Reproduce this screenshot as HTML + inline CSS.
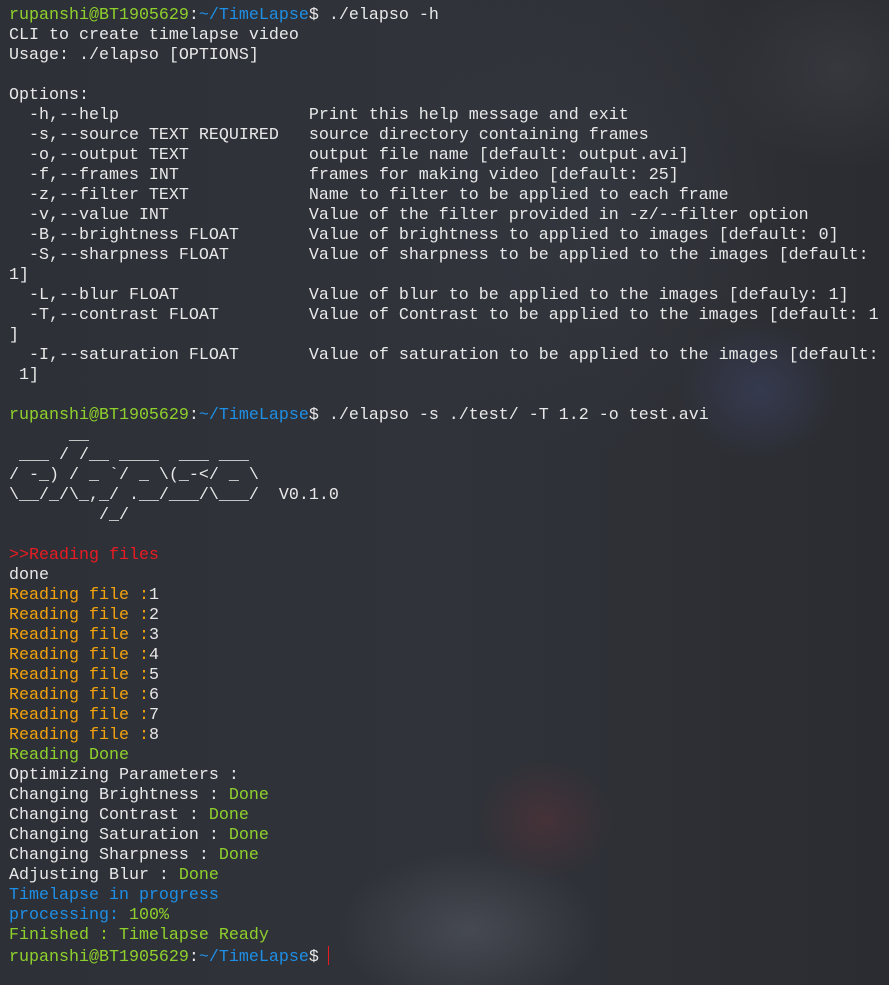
<!DOCTYPE html>
<html><head><meta charset="utf-8"><style>
html,body{margin:0;padding:0;}
body{width:889px;height:985px;overflow:hidden;background:#2c2e33;
background-image:
radial-gradient(ellipse 80px 70px at 760px 390px, rgba(70,80,130,0.35), transparent),
radial-gradient(ellipse 70px 60px at 545px 820px, rgba(110,50,55,0.35), transparent),
radial-gradient(ellipse 130px 80px at 470px 930px, rgba(95,100,110,0.45), transparent),
radial-gradient(ellipse 200px 250px at 600px 200px, rgba(60,65,75,0.35), transparent),
radial-gradient(ellipse 120px 100px at 840px 70px, rgba(70,72,80,0.4), transparent),
linear-gradient(90deg,#2e3037 0%,#30333a 50%,#2b2c31 100%);}
pre{margin:0;position:absolute;left:9px;top:6px;font-family:"Liberation Mono",monospace;font-size:16.67px;line-height:20px;color:#e8e8e8;white-space:pre;}
.g{color:#8fd12c}.b{color:#1e8fe6}.r{color:#e81b22}.o{color:#f2a20d}
.cur{display:inline-block;width:1px;height:19px;background:#e81b22;vertical-align:-4px;margin-left:9px}
</style></head><body><pre><span class="g">rupanshi@BT1905629</span>:<span class="b">~/TimeLapse</span>$ ./elapso -h
CLI to create timelapse video
Usage: ./elapso [OPTIONS]

Options:
  -h,--help                   Print this help message and exit
  -s,--source TEXT REQUIRED   source directory containing frames
  -o,--output TEXT            output file name [default: output.avi]
  -f,--frames INT             frames for making video [default: 25]
  -z,--filter TEXT            Name to filter to be applied to each frame
  -v,--value INT              Value of the filter provided in -z/--filter option
  -B,--brightness FLOAT       Value of brightness to applied to images [default: 0]
  -S,--sharpness FLOAT        Value of sharpness to be applied to the images [default:
1]
  -L,--blur FLOAT             Value of blur to be applied to the images [defauly: 1]
  -T,--contrast FLOAT         Value of Contrast to be applied to the images [default: 1
]
  -I,--saturation FLOAT       Value of saturation to be applied to the images [default:
 1]

<span class="g">rupanshi@BT1905629</span>:<span class="b">~/TimeLapse</span>$ ./elapso -s ./test/ -T 1.2 -o test.avi
      __
 ___ / /__ ____  ___ ___
/ -_) / _ `/ _ \(_-&lt;/ _ \
\__/_/\_,_/ .__/___/\___/  V0.1.0
         /_/

<span class="r">&gt;&gt;Reading files</span>
done
<span class="o">Reading file :</span>1
<span class="o">Reading file :</span>2
<span class="o">Reading file :</span>3
<span class="o">Reading file :</span>4
<span class="o">Reading file :</span>5
<span class="o">Reading file :</span>6
<span class="o">Reading file :</span>7
<span class="o">Reading file :</span>8
<span class="g">Reading Done</span>
Optimizing Parameters :
Changing Brightness : <span class="g">Done</span>
Changing Contrast : <span class="g">Done</span>
Changing Saturation : <span class="g">Done</span>
Changing Sharpness : <span class="g">Done</span>
Adjusting Blur : <span class="g">Done</span>
<span class="b">Timelapse in progress</span>
<span class="b">processing: </span><span class="g">100%</span>
<span class="g">Finished : Timelapse Ready</span>
<span class="g">rupanshi@BT1905629</span>:<span class="b">~/TimeLapse</span>$<span class="cur"></span></pre></body></html>
